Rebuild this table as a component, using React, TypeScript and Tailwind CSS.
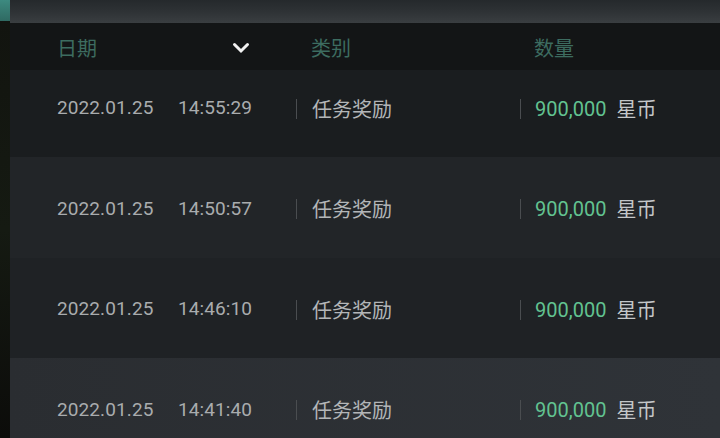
const rows = [
  { date: '2022.01.25', time: '14:55:29', bg: 'bg-[#1a1d1f]', h: 'h-[87px] pb-[10px]' },
  { date: '2022.01.25', time: '14:50:57', bg: 'bg-[#222528]', h: 'h-[101px] pt-[3px]' },
  { date: '2022.01.25', time: '14:46:10', bg: 'bg-[#1f2225]', h: 'h-[100px] pt-[3px]' },
  { date: '2022.01.25', time: '14:41:40', bg: 'bg-gradient-to-r from-[#2a2d31] to-[#2f3338]', h: 'h-[100px] pt-[4px]' },
];

const num = { fontFamily: 'Roboto, "Liberation Sans", sans-serif' };
const cjk = { fontFamily: '"Noto Sans CJK SC", "Noto Sans", sans-serif' };

function Chevron() {
  return (
    <svg width="18" height="12" viewBox="0 0 18 12" className="block">
      <path d="M2.5 2.5 L9 9 L15.5 2.5" fill="none" stroke="#f2f2f2" strokeWidth="3" strokeLinecap="round" />
    </svg>
  );
}

export default function App() {
  return (
    <div className="w-[720px] h-[438px] flex bg-[#0d0e0c] overflow-hidden">
      {/* left edge of the scene behind the panel */}
      <div className="w-[10px] shrink-0 flex flex-col">
        <div className="h-[21px] shrink-0 bg-gradient-to-b from-[#3d8a80] to-[#2f6a62]" />
        <div className="flex-1 bg-gradient-to-b from-[#12140f] via-[#151a12] to-[#0c0c0a]" />
      </div>

      <div className="flex-1 flex flex-col">
        <div className="h-[23px] shrink-0 bg-gradient-to-b from-[#25292c] via-[#2e3235] to-[#3a3e41]" />

        <div className="h-[47px] shrink-0 bg-[#131516] flex items-center pl-[47px] pt-[2px] text-[20px] text-[#3d6c60]" style={cjk}>
          <span className="w-[175px]">日期</span>
          <span className="w-[79px]">
            <Chevron />
          </span>
          <span className="w-[223px]">类别</span>
          <span>数量</span>
        </div>

        {rows.map((r, i) => (
          <div key={i} className={`${r.bg} ${r.h} shrink-0 flex items-center pl-[47px]`}>
            <span className="w-[121px] text-[19px] tracking-[0.1px] text-[#a9acae]" style={num}>{r.date}</span>
            <span className="w-[118px] text-[19px] tracking-[0.1px] text-[#a9acae]" style={num}>{r.time}</span>
            <span className="w-px h-[20px] bg-[#4a4d50] mr-[15px]" />
            <span className="w-[208px] text-[20px] text-[#b3b6b8]" style={cjk}>任务奖励</span>
            <span className="w-px h-[20px] bg-[#4a4d50] mr-[14px]" />
            <span className="text-[20px] text-[#62c391]" style={num}>900,000</span>
            <span className="ml-[10px] text-[20px] text-[#c4c7c9]" style={cjk}>星币</span>
          </div>
        ))}
      </div>
    </div>
  );
}
